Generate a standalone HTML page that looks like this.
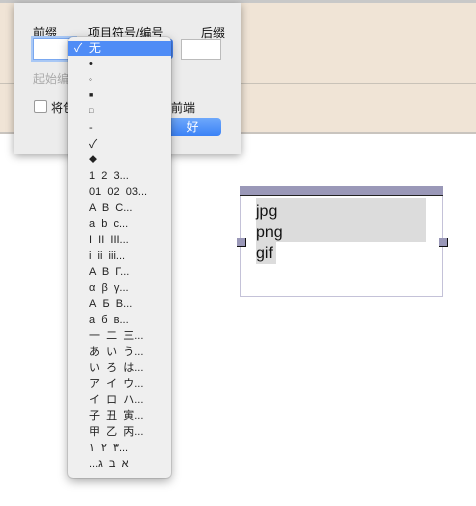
<!DOCTYPE html>
<html><head><meta charset="utf-8"><style>
body{margin:0;width:476px;height:506px;position:relative;background:#fff;font-family:"Liberation Sans","Noto Sans CJK SC",sans-serif;overflow:hidden}
.a{position:absolute}
.top{left:0;top:0;width:476px;height:3px;background:#c8c8c8}
.beige{left:0;top:3px;width:476px;height:129px;background:#f0e4d6;border-bottom:2px solid #c9c4be}
.ln{left:0;top:83px;width:476px;height:1px;background:#c9c2b8}
.dlg{left:14px;top:3px;width:227px;height:151px;background:#ececec;box-shadow:0 2px 8px rgba(0,0,0,.35)}
.t{font-size:12px;color:#111}
.in{background:#fff;border:1px solid #bbb}
.menu{left:68px;top:37px;width:103px;height:441px;background:#efefef;border-radius:5px;box-shadow:0 3px 10px rgba(0,0,0,.35),0 0 0 1px rgba(0,0,0,.1)}
.it{position:absolute;left:21px;font-size:11px;color:#222;white-space:nowrap;line-height:12px;unicode-bidi:bidi-override;direction:ltr}
</style></head><body>
<div class="a top"></div>
<div class="a beige"></div>
<div class="a ln"></div>
<div class="a dlg">
 <div class="a t" style="left:19px;top:21px">前缀</div>
 <div class="a t" style="left:74px;top:21px">项目符号/编号</div>
 <div class="a t" style="left:187px;top:21px">后缀</div>
 <div class="a in" style="left:19px;top:35px;width:40px;height:20px;border-color:#7aa8f0;box-shadow:0 0 0 2px #a9c8f5"></div>
 <div class="a in" style="left:167px;top:36px;width:38px;height:19px"></div>
 <div class="a" style="left:140px;top:36px;width:19px;height:20px;background:#4a86f2;border-radius:3px"></div>
 <div class="a t" style="left:19px;top:67px;color:#aaa">起始编号</div>
 <div class="a" style="left:20px;top:97px;width:11px;height:11px;background:#fff;border:1px solid #999;border-radius:2px"></div>
 <div class="a t" style="left:37px;top:96px">将包含</div>
 <div class="a t" style="left:157px;top:96px">前端</div>
 <div class="a" style="left:150px;top:115px;width:57px;height:18px;background:linear-gradient(#6ea8fb,#3b82f6);border-radius:4px;color:#fff;font-size:12px;text-align:center;line-height:18px">好</div>
</div>
<div class="a menu">
 <div class="a" style="left:0;top:4px;width:103px;height:15px;background:#4f8cf6"></div>
 <div class="it" style="left:6px;top:5px;color:#fff;font-size:12px;line-height:13px">✓&nbsp;&nbsp;无</div>
 <div class="it" style="top:21px">•</div>
 <div class="it" style="top:37px;font-size:8px">◦</div>
 <div class="it" style="top:53px;font-size:7px">■</div>
 <div class="it" style="top:69px;font-size:7px">□</div>
 <div class="it" style="top:85px">-</div>
 <div class="it" style="top:101px;font-size:12px">✓</div>
 <div class="it" style="top:117px;font-size:8px">◆</div>
 <div class="it" style="top:133px">1 &nbsp;2 &nbsp;3...</div>
 <div class="it" style="top:149px">01 &nbsp;02 &nbsp;03...</div>
 <div class="it" style="top:165px">A &nbsp;B &nbsp;C...</div>
 <div class="it" style="top:181px">a &nbsp;b &nbsp;c...</div>
 <div class="it" style="top:197px">I &nbsp;II &nbsp;III...</div>
 <div class="it" style="top:213px">i &nbsp;ii &nbsp;iii...</div>
 <div class="it" style="top:229px">Α &nbsp;Β &nbsp;Γ...</div>
 <div class="it" style="top:245px">α &nbsp;β &nbsp;γ...</div>
 <div class="it" style="top:261px">А &nbsp;Б &nbsp;В...</div>
 <div class="it" style="top:277px">а &nbsp;б &nbsp;в...</div>
 <div class="it" style="top:293px">一 &nbsp;二 &nbsp;三...</div>
 <div class="it" style="top:309px">あ &nbsp;い &nbsp;う...</div>
 <div class="it" style="top:325px">い &nbsp;ろ &nbsp;は...</div>
 <div class="it" style="top:341px">ア &nbsp;イ &nbsp;ウ...</div>
 <div class="it" style="top:357px">イ &nbsp;ロ &nbsp;ハ...</div>
 <div class="it" style="top:373px">子 &nbsp;丑 &nbsp;寅...</div>
 <div class="it" style="top:389px">甲 &nbsp;乙 &nbsp;丙...</div>
 <div class="it" style="top:405px">١ &nbsp;٢ &nbsp;٣...</div>
 <div class="it" style="top:421px">...ג &nbsp;ב &nbsp;א</div>
</div>
<div class="a" style="left:240px;top:186px;width:201px;height:110px;border:1px solid #c4c2d8;border-top:none"></div>
<div class="a" style="left:240px;top:186px;width:203px;height:9px;background:#9a98b8;border-bottom:1px solid #222"></div>
<div class="a" style="left:256px;top:198px;width:170px;height:44px;background:#dcdcdc"></div>
<div class="a" style="left:256px;top:242px;width:20px;height:22px;background:#dcdcdc"></div>
<div class="a" style="left:237px;top:238px;width:8px;height:8px;background:#9a98b8;border-right:1px solid #111;border-bottom:1px solid #111"></div>
<div class="a" style="left:439px;top:238px;width:8px;height:8px;background:#9a98b8;border-right:1px solid #111;border-bottom:1px solid #111"></div>
<div class="a" style="left:256px;top:201px;font-size:16px;line-height:21px;color:#111">jpg<br>png<br>gif</div>
</body></html>
